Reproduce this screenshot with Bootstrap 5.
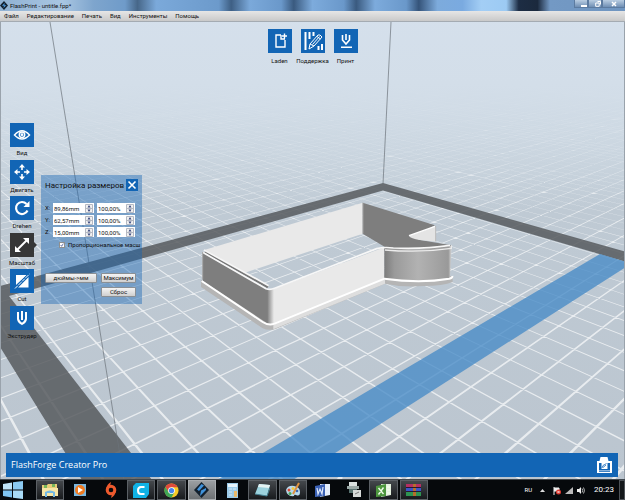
<!DOCTYPE html>
<html lang="ru">
<head>
<meta charset="utf-8">
<meta name="viewport" content="width=device-width, initial-scale=1">
<title>FlashPrint - untitle.fpp*</title>
<link href="https://cdn.jsdelivr.net/npm/bootstrap@5.3.0/dist/css/bootstrap.min.css" rel="stylesheet">
<style>
:root{--brand:#1265b5}
body{font:6px/8px Roboto,"Noto Sans",sans-serif;color:#111;background:#d4dfea}
svg{display:block}
.title-bar{height:11px;background:linear-gradient(90deg,#8fb1d3 0,#a9c6e2 10%,#7ea5cd 15%,#6f9bc9 20%,#476789 22%,#7ba9da 25%,#6c9acb 35%,#3e5f84 37%,#7ba9da 40%,#6a98ca 45%,#3a5a7f 47%,#7dabdc 50%,#6a98ca 55%,#3a5a7f 57%,#7dabdc 60%,#6a98ca 65%,#35547a 67%,#7dabdc 70%,#7aaae0 74%,#a3cef5 77%,#9ccaf3 81%,#1d2d44 83%,#1b293d 86%,#7399c4 88%,#6f95c0 100%)}
.app-name{gap:2px}
.win-ctl button{width:14px;height:8px;border:1px solid #5c7ba0;border-top:0;background:linear-gradient(#b9cde2,#6f8fb4);display:grid;place-items:center}
.win-ctl button:last-child{width:23px}
.menu-strip{height:11px;background:linear-gradient(#e6e6e6,#c9c9c9);border-bottom:1px solid #a4abb2;gap:8px}
.menu-strip a,.task-bar a{color:inherit;text-decoration:none}
.stage{border:solid #9aa3ac;border-width:0 1px;background:#d4dfea}
.scene{inset:0;z-index:0}
.tools-top{padding-top:7px;gap:3px}
.tool{width:30px;color:#111;border:0;background:none;padding:0;display:flex;flex-direction:column;align-items:center;white-space:nowrap}
.tool svg{background:var(--brand);flex:none}
.tools-top .tool span{line-height:15px}
.tools-side{left:6px;top:101px;height:218px}
.tool span{line-height:11px}
.tool.current{position:relative}
.tool.current svg{background:#373737}
.tool.current::after{content:"";position:absolute;left:27px;top:9px;border:3px solid transparent;border-left-color:#373737}
.scale-box{left:40px;top:153px;width:101px;height:129px;padding:4px 4px 5px 4px;background:rgba(18,101,181,.42)}
.scale-box h1{font-size:8px;line-height:13px;margin:0;font-weight:400;white-space:nowrap}
.close-btn{width:12px;height:12px;border:0;padding:0;background:var(--brand)}
.size-grid{display:grid;grid-template-columns:8px 41px 38px;column-gap:0;row-gap:2px;margin-top:11px}
.size-grid label{line-height:10px}
.spin{height:10px;background:#fff;display:flex;align-items:center;overflow:hidden}
.spin:nth-child(3n){margin-left:3px;width:38px}
.spin input{flex:1;min-width:0;height:10px;border:0;padding:0 0 0 1px;background:none;outline:0;color:#111;font-size:6px}
.spin svg{flex:none;margin-right:1px}
.keep{margin-top:4px;padding-left:14px;gap:3px;white-space:nowrap}
.keep input{appearance:none;width:6px;height:6px;margin:0;flex:none;border:1px solid #8e8f8f;background:#fff url("data:image/svg+xml,%3Csvg xmlns='http://www.w3.org/2000/svg' viewBox='0 0 6 6'%3E%3Cpath d='M1 3l1.5 2L5 .8' fill='none' stroke='%23243a86'/%3E%3C/svg%3E") center/100%}
.acts{display:grid;grid-template-columns:52px 35px;gap:4px;margin-top:24px}
.acts button{height:10px;border:1px solid #8a8f94;border-radius:1px;background:linear-gradient(#f4f4f4,#cfcfcf);padding:0;line-height:8px;color:#111}
.acts button:last-child{grid-column:2}
.status{background:var(--brand);color:#fff;margin:0 6px 2px 5px;height:24px;padding:0 6px 0 5px;font-family:"Open Sans","Noto Sans",sans-serif;font-size:9px}
.task-bar{height:21px;background:#06090c;border-top:1px solid #3f474e;color:#fff}
.start{width:35px;padding-left:3px}
.apps{width:394px;flex:none}
.apps a{flex:1 1 0;min-width:0;display:grid;place-items:center;margin:0 1px;border:1px solid transparent}
.apps a.open{border-color:#5b6065;background:linear-gradient(#44484c,#171a1d)}
.apps a.active{border-color:#a9adb0;background:linear-gradient(#9b9fa2,#6d7174)}
.tray{gap:4px}
.tray .clock{font-size:8px;margin:0 5px 0 5px}
.show-desk{width:6px;border:1px solid #4d5257;background:#14181b;padding:0}
</style>
</head>
<body class="d-flex flex-column vh-100 overflow-hidden">
<header>
  <div class="title-bar d-flex justify-content-between">
    <div class="app-name d-flex align-items-center">
      <svg width="8" height="9" viewBox="0 0 8 9"><path d="M4 0l4 4.5L4 9 0 4.5z" fill="#14212f"/><path d="M4.6 2L2 4.8h2L3.4 7 6.4 4.2h-2z" fill="#4d9be0"/></svg>
      <span>FlashPrint - untitle.fpp*</span>
    </div>
    <div class="win-ctl d-flex">
      <button aria-label="Свернуть"><svg width="6" height="6"><path d="M0 4h6v2H0z" fill="#fff"/></svg></button>
      <button aria-label="Развернуть"><svg width="6" height="6"><path d="M2.5.5h3v3M.7 2h3.5v3.3H.7z" fill="none" stroke="#fff"/></svg></button>
      <button aria-label="Закрыть"><svg width="6" height="6"><path d="M1 1l4 4M5 1L1 5" stroke="#fff" stroke-width="1.5"/></svg></button>
    </div>
  </div>
  <nav class="menu-strip d-flex align-items-center ps-1">
    <a href="#">Файл</a><a href="#">Редактирование</a><a href="#">Печать</a><a href="#">Вид</a><a href="#">Инструменты</a><a href="#">Помощь</a>
  </nav>
</header>

<main class="stage flex-fill position-relative d-flex flex-column justify-content-between overflow-hidden">
  <svg class="scene position-absolute w-100 h-100" viewBox="0 22 625 457" preserveAspectRatio="xMidYMid slice" aria-hidden="true">
    <defs>
      <linearGradient id="floor" x1="0" y1="0" x2="0" y2="1"><stop offset="0" stop-color="#d5e0ec"/><stop offset=".2" stop-color="#d0dce6"/><stop offset=".42" stop-color="#bfcad4"/><stop offset="1" stop-color="#bbc5cf"/></linearGradient>
      <linearGradient id="haze" x1="0" y1="0" x2="0" y2="1"><stop offset="0" stop-color="#d5e0ec"/><stop offset=".4" stop-color="#d3dee9"/><stop offset="1" stop-color="#c8d3dd" stop-opacity="0"/></linearGradient>
      <linearGradient id="round"><stop offset="0" stop-color="#7c7c7c"/><stop offset=".15" stop-color="#9a9a9a"/><stop offset=".5" stop-color="#b2b2b2"/><stop offset=".8" stop-color="#a2a2a2"/><stop offset=".95" stop-color="#999"/><stop offset="1" stop-color="#d8d8d8"/></linearGradient>
      <linearGradient id="corner"><stop offset="0" stop-color="#808080"/><stop offset="1" stop-color="#e9e9e9"/></linearGradient>
    </defs>
    <path d="M0 0h625v500H0z" fill="url(#floor)"/>
    <path id="grid" fill="#fff" fill-opacity=".66"/>
    <path d="M0 0h625v210H0z" fill="url(#haze)"/>
    <path d="M383 183L0 286v61l82 133h70L9 296 383 190.600 625 261.500v-10z" fill="#54585c" fill-opacity=".83"/>
    <path d="M600 254L217 480h76L625 267.500v-6z" fill="#478ac6" fill-opacity=".78"/>
    <path d="M50 22L65 115 83 226 124 480M391 22L383 184" fill="none" stroke="#6b727a" stroke-width=".7"/>
    <g transform="translate(190 190) scale(.3333)">
      <path d="M518 38L735 106 700 125 657 138 690 150 784 166 780 176 600 180 518 131z" fill="#7e7e7e"/>
      <path d="M657 137L733 110Q739 110 738 116V155L690 150Q662 146 657 137z" fill="#e4e4e4"/>
      <path d="M657 137L735 109" stroke="#fff" stroke-width="4"/>
      <path d="M737 108V154" stroke="#bbb" stroke-width="3"/>
      <path d="M40 181L518 38V131L165 248z" fill="#e9e9e9"/>
      <path d="M519 38V131" stroke="#a5a5a5" stroke-width="3"/>
      <path d="M33 270V291L218 415Q236 423 256 417L585 281Q640 293 700 288 760 288 788 276V258L585 255 240 390z" fill="#b5b5b5"/>
      <path d="M250 404V418L585 281V264z" fill="#dedede"/>
      <path d="M38 188L235 299V402L38 272z" fill="#7e7e7e"/>
      <path d="M250 297L583 172V270L250 402z" fill="#e9e9e9"/>
      <path d="M232 298H252V402H232z" fill="url(#corner)"/>
      <path d="M583 172Q680 186 785 168L780 264Q690 278 583 268z" fill="url(#round)"/>
      <path d="M35 273L218 396Q236 408 254 401L583 266Q690 281 778 266 788 264 787 258" fill="none" stroke="#fff" stroke-width="6"/>
      <path d="M45 185L234 291" stroke="#777" stroke-width="8" fill="none"/>
      <path d="M42 180L236 287M38 187L228 296Q240 301 254 295L560 176Q583 170 610 174 700 178 780 166" fill="none" stroke="#f7f7f7" stroke-width="5"/>
      <path d="M585 180Q690 189 784 175V166" fill="none" stroke="#ececec" stroke-width="4"/>
      <path d="M38 186V268" stroke="#a5a5a5" stroke-width="3"/>
    </g>
  </svg>

  <div class="tools-top d-flex justify-content-center position-relative">
    <button class="tool"><svg width="24" height="24" viewBox="0 0 24 24" fill="none" stroke="#fff" stroke-width="1.400"><path d="M13 6H8v12h9v-7M13 6v4h4M16.500 4.500v5M14 7h5"/></svg><span>Laden</span></button>
    <button class="tool"><svg width="24" height="24" viewBox="0 0 24 24" fill="none" stroke="#fff"><path d="M4.500 3v18M8.500 3v7M12.500 3v4M17.500 17v4M21 15v6" stroke-width="2"/><path d="M8 20l1-5 8-9q2-1 4 2l-8 9zM9 15l4 2M11.500 15.500l7-8M16 7.500l3.500 2.500" stroke-width="1"/></svg><span>Поддержка</span></button>
    <button class="tool"><svg width="24" height="24" viewBox="0 0 24 24" fill="none" stroke="#fff" stroke-width="1.600"><path d="M8.500 6v5l3.500 4 3.500-4V6M12 5v6M7 18.200h11"/></svg><span>Принт</span></button>
  </div>

  <div class="tools-side position-absolute d-flex flex-column justify-content-between">
    <button class="tool"><svg width="24" height="24" viewBox="0 0 24 24" fill="none" stroke="#fff" stroke-width="1.500"><path d="M4.500 12q7.500-8.500 15 0-7.500 8-15 0z"/><circle cx="12" cy="11.700" r="2.700"/><circle cx="12" cy="11.700" r=".6"/></svg><span>Вид</span></button>
    <button class="tool"><svg width="24" height="24" viewBox="0 0 24 24" fill="#fff"><path d="M12 4l3 3.500H9zM12 20l3-3.500H9zM4 12l3.500-3v6zM20 12l-3.500-3v6z"/><path d="M12 6v4M12 14v4M6 12h4M14 12h4" stroke="#fff" stroke-width="1.600"/></svg><span>Двигать</span></button>
    <button class="tool"><svg width="24" height="24" viewBox="0 0 24 24"><path d="M17.500 14.500A6 6 0 1 1 16.500 8" fill="none" stroke="#fff" stroke-width="2.200"/><path d="M19.500 5v6h-6z" fill="#fff"/></svg><span>Drehen</span></button>
    <button class="tool current"><svg width="24" height="24" viewBox="0 0 24 24" fill="#fff"><path d="M7 17L17 7" stroke="#fff" stroke-width="2"/><path d="M19 5v6l-6-6zM5 19v-6l6 6z"/></svg><span>Масштаб</span></button>
    <button class="tool"><svg width="24" height="24" viewBox="0 0 24 24" fill="#fff"><path d="M6 6h11L6 16zM18.500 8v10.500H8z"/><path d="M6 18.500L18.500 6" stroke="#1265b5" stroke-width="2.600"/><path d="M5 19.500L19.500 5" stroke="#fff" stroke-width="1" stroke-dasharray="4 1"/></svg><span>Cut</span></button>
    <button class="tool"><svg width="24" height="24" viewBox="0 0 24 24" fill="none" stroke="#fff" stroke-width="2"><path d="M8 6v7q.5 3 4 5 3.500-2 4-5V6M12 5v9"/></svg><span>Экструдер</span></button>
  </div>

  <section class="scale-box position-absolute">
    <div class="d-flex justify-content-between">
      <h1>Настройка размеров</h1>
      <button class="close-btn" aria-label="Закрыть"><svg width="12" height="12"><path d="M2.500 2.500l7 7M9.500 2.500l-7 7" stroke="#fff" stroke-width="1.600"/></svg></button>
    </div>
    <div class="size-grid" id="sizes"></div>
    <div class="keep d-flex align-items-center"><input type="checkbox" id="keep" checked><label for="keep">Пропорциональное масш</label></div>
    <div class="acts"><button>дюймы-&gt;мм</button><button>Максимум</button><button>Сброс</button></div>
  </section>

  <div class="status d-flex align-items-center justify-content-between position-relative">
    <span>FlashForge Creator Pro</span>
    <svg width="15" height="16" viewBox="0 0 15 16"><path d="M3.500 0h7l1 4H15v12H0V4h2.500z" fill="#fff"/><path d="M2 6h11v7.500H2z" fill="#1265b5"/><path d="M4.500 6h6v6h-6z" fill="#fff"/><path d="M5 11l1-2.500 3.500-2M6 10.500l3-2.500M2 14.500h11" stroke="#1265b5" fill="none" stroke-width=".8"/></svg>
  </div>
</main>

<footer class="task-bar d-flex justify-content-between">
  <div class="d-flex">
    <a class="start d-flex align-items-center" href="#" aria-label="Пуск"><svg width="20" height="18" viewBox="0 0 20 18"><path d="M0 3l9-1.500v7H0z" fill="#bfe3f8"/><path d="M10 1.300L20 0v8.500H10z" fill="#8bcaf2"/><path d="M0 9.500h9v7L0 15z" fill="#7fc4f1"/><path d="M10 9.500h10V18l-10-1.300z" fill="#a9dbf7"/></svg></a>
    <nav class="apps d-flex">
      <a class="open" href="#" aria-label="Проводник"><svg width="16" height="15" viewBox="0 0 16 15"><path d="M0 2h5l1-1h9v12H0z" fill="#e8cc78"/><path d="M2 2h3v3H2zM10 1h3v3h-3z" fill="#77b85b"/><path d="M0 5h16v8H0z" fill="#f7e6a5"/><path d="M3 14V9q5-3 10 0v5h-2v-4H5v4z" fill="#73b9e4"/></svg></a>
      <a href="#" aria-label="Медиаплеер"><svg width="14" height="14" viewBox="0 0 14 14"><path d="M1 1h12v12H1z" fill="#79b6de"/><circle cx="7" cy="7" r="5" fill="#ef7a20"/><path d="M5 4l5 3-5 3z" fill="#fff"/></svg></a>
      <a href="#" aria-label="Origin"><svg width="14" height="16" viewBox="0 0 14 16"><circle cx="7" cy="8" r="3.800" fill="none" stroke="#ee5a2d" stroke-width="3"/><path d="M2 7Q3 2 7 0L6 4zM12 9q-1 5-5 7l1-4z" fill="#ee5a2d"/></svg></a>
      <a class="open" href="#" aria-label="Cura"><svg width="16" height="16" viewBox="0 0 16 16"><path d="M3 1h13v11l-3 4H0V4z" fill="#10b2e5"/><path d="M11.500 5H8Q5 5 5 8.500T8 12h3.500" fill="none" stroke="#fff" stroke-width="2"/></svg></a>
      <a class="open" href="#" aria-label="Chrome"><svg width="15" height="15" viewBox="0 0 16 16"><circle cx="8" cy="8" r="7.500" fill="#f7ca26"/><path d="M1.500 4.200a7.500 7.500 0 0 1 13 .3H8L5 10z" fill="#df4a3c"/><path d="M1.500 4.200A7.500 7.500 0 0 0 8 15.500l3-5.500H5z" fill="#3fa757"/><circle cx="8" cy="8" r="3.600" fill="#fff"/><circle cx="8" cy="8" r="2.800" fill="#4785ec"/></svg></a>
      <a class="active" href="#" aria-label="FlashPrint"><svg width="15" height="16" viewBox="0 0 15 16"><path d="M7.500 0L15 8l-7.500 8L0 8z" fill="#12202e"/><path d="M7.500 2L3 7.500 5 9l5-5.500zM12 6L7 8.500 6 14l6-6z" fill="#3f93dc"/></svg></a>
      <a href="#" aria-label="Калькулятор"><svg width="11" height="15"><path d="M0 0h11v15H0z" fill="#9ccbe9"/><path d="M1 1h9v3H1z" fill="#e6f3fa"/><path d="M2 6h3M6 6h3M2 9h3M2 12h3" stroke="#d3e9f6" stroke-width="1"/><path d="M7 8h3v6H7z" fill="#e9b96a"/></svg></a>
      <a class="open" href="#" aria-label="Блокнот"><svg width="15" height="14"><path d="M4 1l11 1-3 11-12-2z" fill="#9bd2dd"/><path d="M4 1l11 1-1 3-11-1z" fill="#e3f2f2"/><path d="M0 11l12 2 3-8" stroke="#437f91" fill="none"/></svg></a>
      <a class="open" href="#" aria-label="Paint"><svg width="16" height="16"><path d="M1 8Q3 3 9 4t6 6-4 3q-2-1-2 1Q2 15 1 8z" fill="#b9daee"/><circle cx="4" cy="8" r="1.500" fill="#d84b38"/><circle cx="8" cy="6.500" r="1.500" fill="#f3c83c"/><circle cx="5" cy="11.500" r="1.500" fill="#4aa757"/><circle cx="12" cy="9" r="1.300" fill="#3b68b3"/><path d="M8 12l6-11" stroke="#dd903e" stroke-width="2"/></svg></a>
      <a href="#" aria-label="Word"><svg width="15" height="15"><path d="M5 1h10v11L5 14z" fill="#e6eefa"/><path d="M0 3l10-2v12L0 14z" fill="#3b61b4"/><path d="M2 5l1 6 2-5 2 5 1-7M11 4h3M11 7h3M11 10h3" fill="none" stroke="#dfe9fa" stroke-width="1.200"/></svg></a>
      <a href="#" aria-label="Сканер"><svg width="15" height="16"><path d="M3 0h8v4H3z" fill="#d9e0df"/><path d="M1 4h12v3H1z" fill="#9ba9a7"/><path d="M3 7h8v4H3z" fill="#57716f"/><path d="M7 8h8v7H7z" fill="#d6d9d8"/><path d="M9 12l4-2" stroke="#777"/></svg></a>
      <a class="open" href="#" aria-label="Excel"><svg width="15" height="15"><path d="M5 1h10v11L5 14z" fill="#e4f1df"/><path d="M0 3l10-2v12L0 14z" fill="#4d963e"/><path d="M2.500 5l5 6M7.500 4.500l-5 7M11 4h3M11 7h3M11 10h3" stroke="#effbe9" stroke-width="1.400"/></svg></a>
      <a class="open" href="#" aria-label="WinRAR"><svg width="16" height="12"><path d="M0 0h15v4H0z" fill="#b52f62"/><path d="M0 4h15v4H0z" fill="#3c55c6"/><path d="M0 8h15v4H0z" fill="#2e9451"/><path d="M7 0h3v12H7z" fill="#b56d2d"/><path d="M0 3.500h15M0 7.500h15" stroke="#271831"/></svg></a>
    </nav>
  </div>
  <div class="d-flex">
    <div class="tray d-flex align-items-center">
      <span class="me-1">RU</span>
      <svg width="5" height="4"><path d="M2.500 1L5 4H0z" fill="#ddd"/></svg>
      <svg class="ms-1" width="8" height="9"><path d="M1 1v8M1 2h5v3H1" stroke="#eee" fill="#eee"/><circle cx="5.500" cy="6" r="2.500" fill="#df3a31"/><path d="M4.500 5l2 2M6.500 5l-2 2" stroke="#fff" stroke-width=".7"/></svg>
      <svg width="8" height="8"><path d="M0 8L8 1v7z" fill="#bbb"/></svg>
      <svg width="8" height="8"><path d="M0 3h2l2-2v7L2 6H0z" fill="#eee"/><path d="M5 2.500q1.500 2 0 4M6.500 1.500q2 3 0 6" fill="none" stroke="#ddd" stroke-width=".8"/></svg>
      <span class="clock">20:23</span>
    </div>
    <button class="show-desk" aria-label="Свернуть все окна"></button>
  </div>
</footer>

<script>
/* Perspective floor grid: u runs to the right vanishing point, v to the left one. */
const project = (u, v) => {
  const w = 1 + .0418 * u + .0482 * v;
  return ((207.3 + 41.95 * u - 9.852 * v) / w).toFixed(2) + ' ' + (17 + 391.3 / w).toFixed(2);
};
const h = .028, parts = [];
const strip = (...corners) => parts.push('M' + corners.map(p => project(...p)).join('L') + 'z');
for (let n = -9; n < 120; n++) {
  const first = Math.max(-14, (-.6 - .0482 * n) / .0418), last = 160;
  strip([first, n - h], [last, n - h], [last, n + h], [first, n + h]);
}
/* Same winding as above, so that crossings stay filled. */
for (let n = -10; n < 120; n++) {
  const first = Math.max(-14, (-.6 - .0418 * n) / .0482), last = 160;
  strip([n + h, first], [n + h, last], [n - h, last], [n - h, first]);
}
document.getElementById('grid').setAttribute('d', parts.join(''));

const arrows = '<svg width="8" height="9"><path d="M.5.500h7v8h-7zM.5 4.500h7" fill="#f0f0f0" stroke="#b5b9c2"/><path d="M4 1l1.500 2.500h-3zM4 8L2.500 5.500h3z" fill="#38477e"/></svg>';
document.getElementById('sizes').innerHTML = [['X', '89,86mm'], ['Y', '62,57mm'], ['Z', '15,00mm']].map(([axis, size]) =>
  `<label for="size${axis}">${axis}:</label><div class="spin"><input id="size${axis}" value="${size}">${arrows}</div><div class="spin"><input aria-label="${axis}, %" value="100,00%">${arrows}</div>`).join('');
</script>
<script src="https://cdn.jsdelivr.net/npm/bootstrap@5.3.0/dist/js/bootstrap.bundle.min.js"></script>
</body>
</html>
